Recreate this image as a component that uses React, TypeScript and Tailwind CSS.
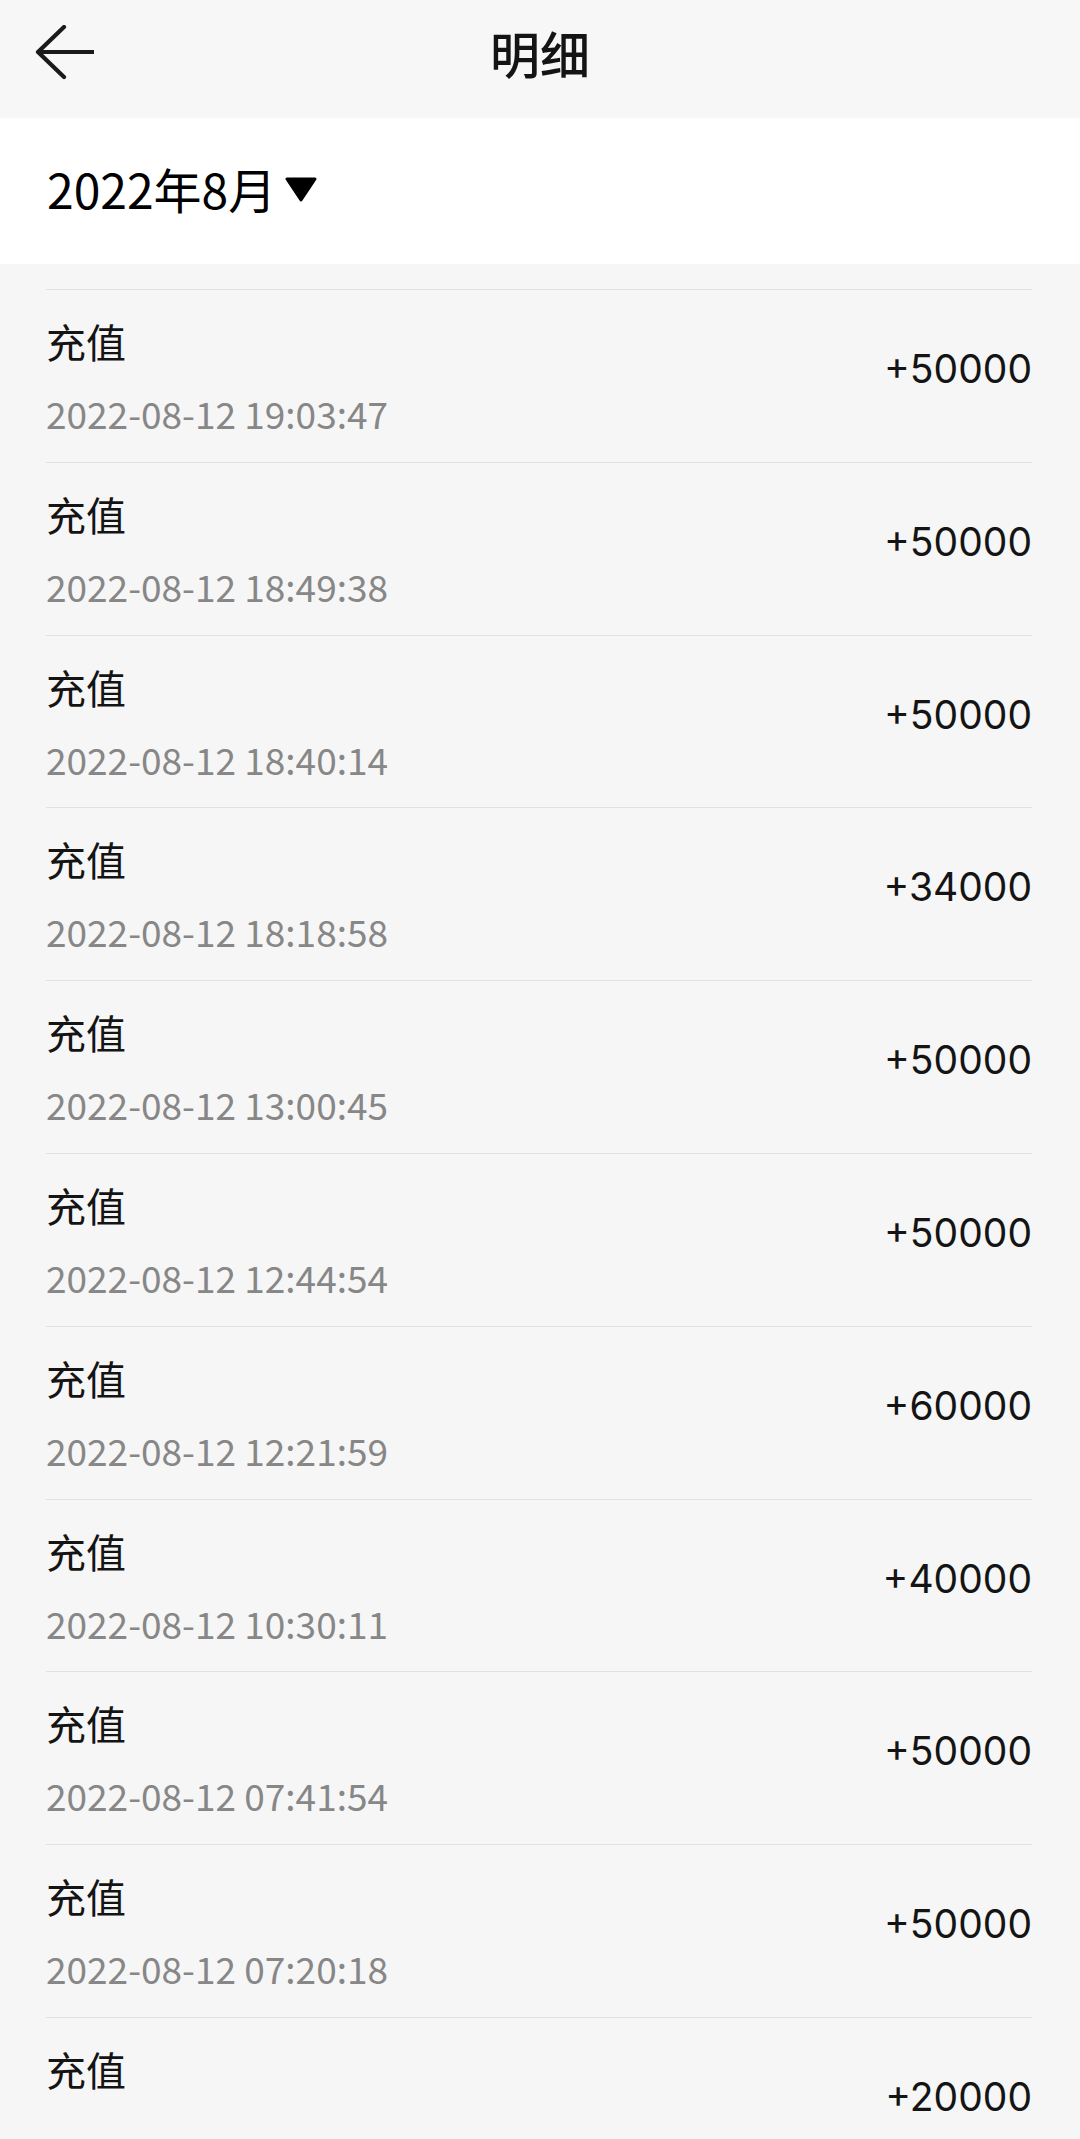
interface Record {
  time?: string
  amount: string
}

const records: Record[] = [
  { time: '2022-08-12 19:03:47', amount: '+50000' },
  { time: '2022-08-12 18:49:38', amount: '+50000' },
  { time: '2022-08-12 18:40:14', amount: '+50000' },
  { time: '2022-08-12 18:18:58', amount: '+34000' },
  { time: '2022-08-12 13:00:45', amount: '+50000' },
  { time: '2022-08-12 12:44:54', amount: '+50000' },
  { time: '2022-08-12 12:21:59', amount: '+60000' },
  { time: '2022-08-12 10:30:11', amount: '+40000' },
  { time: '2022-08-12 07:41:54', amount: '+50000' },
  { time: '2022-08-12 07:20:18', amount: '+50000' },
  // last row is cut by the bottom of the screen
  { amount: '+20000' },
]

function BackArrow() {
  return (
    <svg width="60" height="56" viewBox="0 0 60 56" fill="none" className="text-[#1a1a1a]">
      <path
        d="M4 27 H59 M4 27 L30 2 M4 27 L30 52"
        stroke="currentColor"
        strokeWidth="4.2"
        strokeLinecap="round"
        strokeLinejoin="round"
      />
    </svg>
  )
}

function RecordRow({ record }: { record: Record }) {
  return (
    <div className="flex h-[172.8px] justify-between border-t border-[#e2e2e2]">
      <div className="flex flex-col pt-[31px]">
        <span className="text-[40px] leading-[40px] text-[#141414]">充值</span>
        {record.time && (
          <span className="mt-[32px] text-[37px] leading-[40px] text-[#878787]">{record.time}</span>
        )}
      </div>
      <div
        className="pt-[59px] text-[39px] leading-[40px] text-[#141414]"
        style={{ fontFamily: 'Inter, "Noto Sans CJK SC", sans-serif' }}
      >
        {record.amount}
      </div>
    </div>
  )
}

export default function App() {
  return (
    <div
      className="min-h-screen overflow-hidden bg-[#f6f6f6]"
      style={{ fontFamily: '"Noto Sans CJK SC", "Noto Sans", sans-serif' }}
    >
      <header className="grid h-[118px] grid-cols-[1fr_auto_1fr] items-center bg-[#f7f7f7] pb-[14px]">
        <button className="justify-self-start pl-[34px] pt-[2px]">
          <BackArrow />
        </button>
        <h1 className="text-[50px] font-medium leading-none text-[#141414]">明细</h1>
        <div />
      </header>

      <div className="flex h-[146px] items-center gap-[8px] bg-white px-[47px] pb-[6px]">
        <span className="text-[48px] leading-none text-black">2022年8月</span>
        <svg width="34" height="26" viewBox="0 0 34 26" className="mt-[2px]">
          <path d="M3 3 H31 L17 24 Z" fill="#000" stroke="#000" strokeWidth="3" strokeLinejoin="round" />
        </svg>
      </div>

      <div className="pl-[46px] pr-[48px] pt-[25px]">
        {records.map((r, i) => (
          <RecordRow key={i} record={r} />
        ))}
      </div>
    </div>
  )
}
